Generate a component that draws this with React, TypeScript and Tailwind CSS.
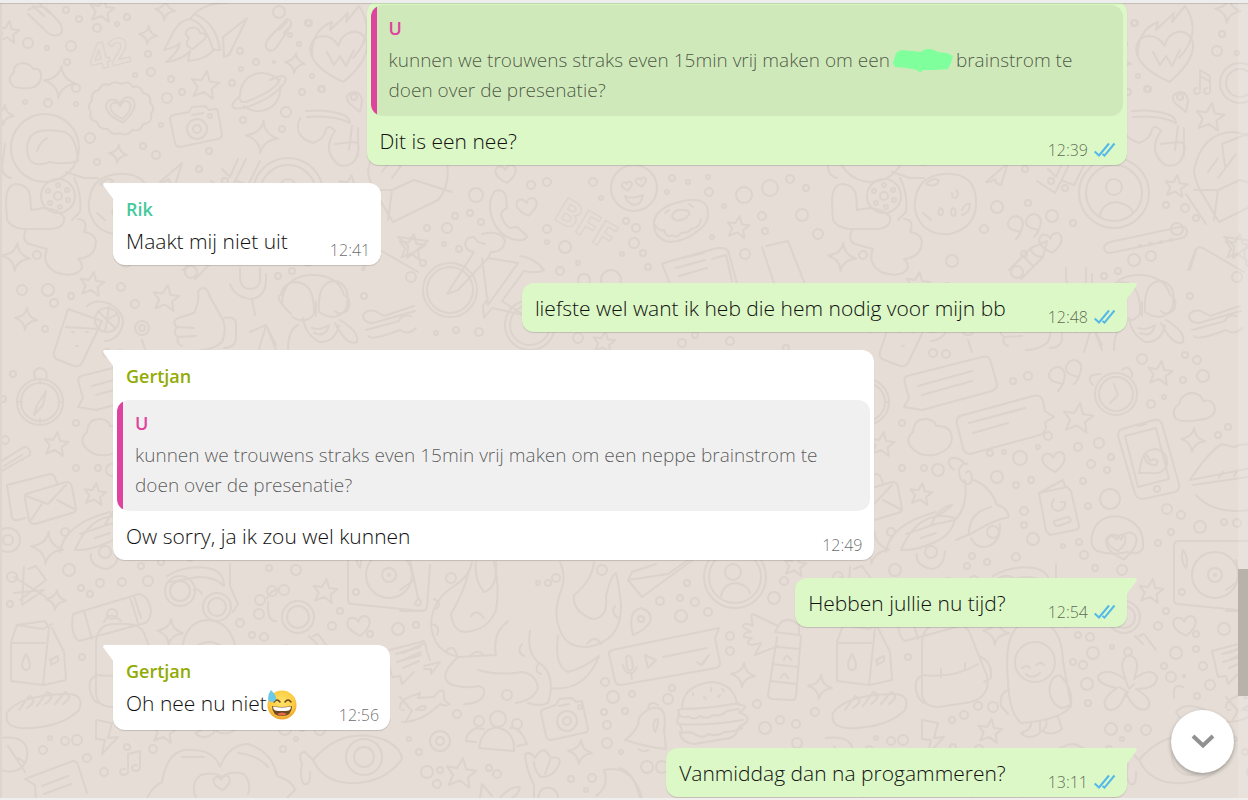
import { ReactNode } from 'react';

type Point = [x: number, y: number, size: number];

const BUBBLES: Point[] = [
  [66, 10, 3], [79, 19, 3], [97, 28, 4], [117, 24, 2], [127, 17, 3], [28, 43, 5], [47, 48, 2], [71, 46, 5],
  [67, 62, 3], [148, 54, 3], [135, 75, 2], [151, 72, 4], [171, 79, 3], [182, 92, 3], [167, 98, 5], [76, 88, 4],
  [76, 104, 2], [48, 103, 4], [25, 102, 2], [90, 138, 5], [161, 125, 2], [143, 146, 3], [156, 155, 4], [97, 162, 3],
  [209, 151, 3], [199, 169, 3], [240, 51, 3], [256, 62, 3], [274, 62, 1], [279, 12, 6], [309, 23, 3], [299, 44, 2],
  [241, 69, 2], [232, 83, 3], [302, 92, 3], [322, 89, 3], [286, 112, 5], [282, 129, 3], [243, 120, 3], [312, 76, 2],
  [531, 185, 4], [547, 182, 4], [476, 195, 7], [455, 216, 3], [470, 213, 3], [481, 222, 3], [427, 228, 3], [447, 228, 5],
  [444, 244, 2], [459, 249, 3], [423, 263, 3], [547, 229, 4], [547, 242, 2], [565, 247, 6], [593, 182, 4], [601, 198, 2],
  [626, 221, 3], [636, 228, 4], [634, 243, 5], [622, 254, 2], [643, 253, 3], [648, 267, 3], [578, 263, 2], [560, 271, 4],
  [667, 192, 2], [672, 178, 3], [688, 182, 2], [708, 177, 2], [709, 192, 4], [724, 206, 2], [762, 216, 4], [765, 231, 3],
  [745, 254, 5], [712, 237, 2], [744, 195, 8], [770, 188, 8], [790, 179, 4], [806, 188, 3], [802, 215, 6], [818, 234, 5],
  [22, 290, 5], [48, 290, 6], [71, 296, 3], [54, 303, 4], [45, 329, 3], [121, 287, 4], [135, 304, 4], [13, 374, 3],
  [3, 399, 3], [76, 423, 3], [5, 440, 4], [76, 468, 3], [98, 468, 3], [65, 532, 4], [278, 276, 3], [191, 272, 6],
  [364, 296, 3], [37, 255, 4], [171, 207, 6], [202, 203, 3], [225, 181, 3], [239, 188, 3], [226, 216, 6], [247, 223, 3],
  [158, 229, 4], [126, 261, 6], [198, 254, 3], [340, 205, 3], [359, 208, 4], [370, 218, 3], [351, 229, 6], [325, 256, 5],
  [308, 260, 6], [292, 271, 3], [290, 35, 2], [396, 34, 3], [391, 51, 5], [411, 53, 2], [321, 89, 3], [308, 23, 3],
  [187, 381, 3], [202, 376, 4], [316, 359, 5], [357, 380, 3], [377, 376, 6], [359, 355, 3], [371, 360, 4], [325, 404, 4],
  [338, 397, 2], [212, 447, 2], [222, 436, 4], [252, 447, 4], [273, 443, 5], [285, 457, 3], [281, 470, 3], [265, 464, 4],
  [164, 453, 3], [178, 452, 2], [194, 458, 7], [171, 477, 6], [112, 470, 6], [190, 485, 3], [205, 480, 3], [257, 481, 3],
  [262, 506, 3], [198, 511, 4], [198, 525, 3], [207, 539, 6], [341, 509, 5], [355, 515, 4], [374, 527, 6], [345, 532, 3],
  [332, 543, 3], [398, 522, 3], [411, 523, 4], [253, 542, 3], [237, 546, 2], [258, 555, 4], [190, 557, 4], [161, 562, 3],
  [146, 556, 3], [402, 427, 3], [392, 435, 3], [107, 353, 4], [120, 354, 4],
  [411, 277, 5], [479, 332, 4], [456, 330, 3], [436, 333, 2], [578, 338, 5], [611, 280, 10], [584, 280, 6],
  [682, 343, 4], [730, 341, 4], [695, 335, 3], [786, 348, 3],
  [12, 577, 5], [10, 604, 3], [69, 570, 6], [81, 588, 3], [90, 594, 3], [100, 583, 4], [122, 582, 4], [148, 581, 5],
  [141, 566, 3], [82, 657, 3], [65, 741, 4], [50, 738, 2], [77, 740, 5], [43, 750, 4], [87, 758, 4], [104, 772, 4],
  [127, 747, 3], [153, 749, 4], [240, 623, 4], [252, 635, 3], [264, 637, 4], [332, 626, 4], [340, 611, 3], [398, 629, 6],
  [370, 634, 3], [283, 749, 3], [296, 570, 5], [269, 568, 3], [267, 653, 6], [286, 647, 2], [302, 652, 4], [350, 653, 6],
  [370, 649, 3], [338, 666, 3], [345, 677, 5], [377, 666, 4], [358, 676, 1], [384, 685, 5], [257, 665, 4], [261, 684, 6],
  [262, 703, 3], [371, 696, 3], [152, 706, 4], [167, 707, 5], [138, 715, 4], [126, 720, 3], [285, 729, 6], [302, 728, 3],
  [320, 730, 5], [296, 739, 2], [451, 578, 5], [602, 570, 5], [538, 583, 2], [548, 583, 3], [556, 578, 4], [687, 583, 3],
  [660, 601, 4], [680, 598, 3], [695, 602, 4], [681, 616, 6], [708, 612, 4], [774, 598, 6], [784, 581, 4], [730, 636, 4],
  [730, 651, 4], [605, 682, 4], [613, 697, 6], [632, 694, 3], [604, 712, 3], [625, 711, 3], [607, 725, 4], [607, 743, 5],
  [621, 752, 2], [672, 688, 3], [668, 699, 5], [757, 704, 4], [765, 728, 6], [780, 720, 4], [796, 724, 4], [507, 695, 5],
  [457, 714, 4], [409, 739, 2], [419, 752, 3], [427, 772, 6], [440, 770, 3], [437, 784, 4], [489, 768, 3], [497, 774, 4],
  [571, 779, 3], [592, 778, 4], [586, 790, 2], [647, 767, 6], [662, 767, 6], [797, 743, 5], [815, 712, 4], [416, 625, 3],
];

const STARS: Point[] = [
  [8, 32, 11], [102, 10, 12], [205, 85, 14], [384, 117, 14], [350, 186, 11], [738, 227, 11], [92, 284, 12], [166, 298, 13],
  [56, 444, 12], [95, 494, 11], [252, 418, 15], [334, 373, 12], [325, 591, 12], [164, 731, 12], [461, 773, 15], [604, 342, 11],
  [795, 565, 11], [412, 247, 13],
];

const SPARKLES: Point[] = [
  [165, 10, 10], [148, 35, 9], [295, 63, 10], [60, 82, 16], [262, 137, 16], [118, 154, 9], [16, 257, 14], [4, 115, 10],
  [26, 319, 11], [367, 440, 12], [56, 600, 10], [170, 632, 13], [580, 752, 12], [743, 675, 12], [402, 10, 13], [47, 548, 16],
  [820, 687, 12],
];

const HEARTS: Point[] = [
  [121, 110, 14], [121, 110, 10], [527, 207, 10], [225, 243, 11], [228, 462, 11], [359, 626, 11], [340, 57, 28], [627, 186, 5], [641, 182, 5],
  [506, 174, 10], [291, 543, 9], [222, 783, 8], [296, 546, 15],
];

const DRAWINGS = [
  // mittens and cloud
  'M28 10q8-6 18-2l14 15q5 10-2 12-8 2-14-6L28 14M33 6l11 10M40 4l9 9',
  'M268 50q-5-5 1-12l18-19q5 1 4 7l-15 22q-4 4-8 2M279 30l8-8M284 33l7-8',
  'M13 86q-7-7 1-14-1-8 9-9 8 1 10 6 9-2 8 9-2 9-11 10-12 1-17-2',
  // rocket and kite
  'M190 19q12-17 38-16M190 19q16 5 23 31l7 0q-4-28-26-36M190 19q-10 1-16 12l-10 19q13-3 16-7-2 10-14 19 16-2 24-11l-2 10q20-2 26-12M190 28q-8 5-1 10-6 8 4 11 8-7 12-10 3-6-5-6-2-7-10-5',
  'M223 37l24-19-18 37-5 2-1-20',
  // planet
  'M240 96a22 22 0 0 1 39-15M280 86a22 22 0 0 1-36 20M240 96q-11 9-6 12 10 3 35-11 20-14 16-20-3-3-15 3M240 99q1 6 13 0 24-10 27-20',
  // badge
  'M121 84q8-4 12 3 8-2 10 6 9 2 7 10 6 5 1 11 2 9-8 10-2 8-11 6-5 7-12 3-8 3-12-4-9 1-11-7-9-2-6-10-5-6 1-11-2-9 7-11 3-8 10-5 5-5 12-1',
  // camera
  'M174 115l15-3 3-5 13-1 4 4 6-1q3 0 3 3l4 22q0 4-4 5l-38 8q-4 0-5-4l-5-24q0-3 4-4M192 115l11-2',
  'M544 709l12-4 3-6 13-1 4 4 6-1 6 28q0 4-5 4l-32 7q-4 0-5-4l-5-23q0-3 3-4M559 706l10-2',
  // astronaut
  'M28 142q4-15 30-11 18-1 20 30-14 4-28 1-17 6-21-4-3-6-1-16M37 151q3-9 10-13M11 178q-9-2-9-12l3-22M17 184q-11 0-11 18l1 18q4 8 17 9h28q14-2 12-12-6-8-20-9l-13 2-1-15q-2-10-13-11M26 230q-5 10 3 14l18 5q-6 14 8 23 20 7 27-4 0-6-4-9 18-2 18-18-2-8-12-9 5-12-6-13M66 172l18 6h14M74 178q8 15 6 34l-8 8',
  // cookie
  'M90 196q4-20 28-22 30-2 32 25 2 28-26 35-25 2-33-18-4-8-1-20M100 184q8-8 13-3-4 7-13 3M130 190q4 4 0 8-5 0-4-5M114 208q5 1 2 7-6 1-2-7M136 210q4-8 8-6-1 10-8 11M97 213l8 7M126 208q5 0 3 8-6 0-3-8',
  // sunglasses
  'M306 111q20-2 35 3 9 3 9 9-16-8-43-6M300 118q-8 18 13 25 12-4 13-14 4-5 9 2-14 20 4 34 16 4 19-14 3-9-6-9l-17 2M352 126l-3 24M358 128l0 28',
  'M167 576q18-11 41-8 16 3 16 18-8-9-26-9l-28 5M230 564v22l8 18-5 8M194 590q4-2 8 4',
  // burning heart, pin, note
  'M312 56q-1-26 20-34l-2 8 18-17-2 9 13-16q18 26-6 52',
  'M327 52l7 13 6-9 6 10 8-16M354 92q7 0 8 9l-2 11-10-8q-8-9 4-12',
  'M374 90v-20l10 6v15M374 76l9 5M374 92a3 3 0 1 1-3-4M384 92a3 3 0 1 1-3-4',
  // paper plane, checks and envelope
  'M160 182l22-19-7 22q-6-1-6-6-5 4-9 3M211 181l18 12 17-34M237 181l11 4 12-24M222 169l8 8 8-18',
  'M374 190q-6-12-6-20 8-38 40-38 34 6 38 24 6 28-8 44l-45 22-19-32M368 190h24l-4 30M392 190l22-10 38 12M382 172l10-14M392 178l18-24',
  'M399 166l-3-22 60-24M430 163l15-3M380 224l-20-30',
  // quotes
  'M190 239q7-8 1-8-10-2-9-8 2-7 9-7 8 3 5 12-1 6-6 11M208 237q7-8 1-8-10-2-9-8 2-7 9-7 8 3 5 12-1 6-6 11',
  'M232 391q7-8 1-8-11-2-10-9 2-7 10-7 8 3 5 13-1 6-6 11M248 384q7-8 1-8-10-2-9-9 2-7 9-7 9 3 5 13-1 6-6 11',
  // crayon, password field
  'M183 270l22-22 16-7-4 16-22 22M205 248q0 8 12 9M197 256l10 10M284 242l70-15q6-1 7 4 0 6-5 7l-72 15q-5 0-6-5 0-4 6-6M362 270l8-21q4-4 10 1l38 22M370 250l-6 20',
  // handset
  'M495 191q8-3 11 5l1 12q-5 2-6 7 3 10 9 13l7-1 10 9q-1 5-10 4-16-2-24-19-7-18 2-30',
  // face and donut
  'M625 196q7 4 18-1-2 10-9 10-7-2-9-9M654 222q2-14 25-20 24-6 28 5 4 14-8 23-14 12-30 12-16-4-15-20M655 225q4 7 9 5 3 9 8 5 5 4 9-2 8 0 10-4 9-1 10-10M672 216q3-9 16-5 4 3-4 8-10 4-12-3M665 213l4-3M689 204l4 3',
  // bird and bicycle
  'M398 237l30 4q-10 8-21 17l1-12-10-9M482 234q18-4 23 6-1 12-14 12l-3 6-30 32-11 4 27-42q-7 0-9-8 1-8 9-7l4 5 7 2M488 258l30 5-30 42-6-47M520 256q15 2 24 14-8 4-20 1l-22 30 22 14-32-7-8 10-1-12 5-8',
  // newspaper
  'M667 262l50-14q11-1 12 6l8 30H670l-8-20 5-2M674 260l30-7M676 268l29-8M679 276l28-8M712 259l14-4 6 26M762 247l12 36M766 246l22-5 18 46',
  // drink and lemon
  'M68 309l34 12-20 42q-3 4-8 3l-18-7q-3-3-2-7l14-43M66 327l32 2M87 306q9-8 23-2 14 8 13 20-4 16-18 17M107 320l-9-9M107 320l2-13M107 320l10-6M107 320l8 8M107 320l-2 12M72 332h2M86 332h2M76 346h2',
  // thumb
  'M194 313q6-12 4-22 8-8 12 6l13 23q4 10-1 22-9 8-22 8M194 313l-16 5q-7 4-1 9-5 6 1 10-2 7 4 9M176 327l18 1M178 337l18-1M224 318q10-2 12 4v18q-2 8-12 8',
  // microphone, lollipop, arrow
  'M240 268v10q1 11 10 11 11-1 10-11v-10M230 284q5 14 22 15 14-3 14-19v-6M252 299l3 16M142 340l4 12M250 332l16-7 10 20M266 326l-8 26M268 330l8 20',
  // monkey
  'M282 305q0-28 28-30 28-1 34 20 9 5 3 16-8 5-12 0M291 314q-18-18-10-19 2-12 14-13 20 0 19 32-8 11-22 3M319 312q-2-32 17-31 16 5 10 28-10 14-27 3M303 318q2 16 16 24 16 1 20-17M312 328q8 3 17-3-3 13-15 8M288 350q0-20 10-25M340 320q20 12 17 22-10 5-22-19M316 302v14',
  // spoons
  'M363 315q4-6 12-4l9 5 30-10M363 315q0 8 10 8l42-12M368 336q4 5 32-6 8 6 16-2M366 330l33-9q2-7 12-5',
  // compass and chat cards
  'M40 382v-4M40 423v-4M18 402h4M59 402h4M46 391l-9 14-3 10 9-10 3-14M36 379q-5-8 3-11 10 1 7 12',
  'M81 376l75-19q8-2 9 6l6 21q0 5-5 7l-70 19q-12-2-18-3l5-9-4-14q-2-6 2-8M92 386l54-15M96 395l50-14',
  'M134 416l73-20q8-2 10 5l2 10 9 6-9 5 1 6q-2 6-6 7l-70 19q-6-1-7-6l-6-24q-1-6 3-8M143 423l56-15M147 433l35-10',
  'M86 448q-8-8 1-16 1-14 14-13 9 2 9 7 15-1 16 12-1 13-18 17-14 2-22-7',
  'M350 419q-6-8 3-15 4-14 18-10 5 2 6 7 11-3 12 9-2 9-17 10-15 3-22-1',
  // paperclip and letters
  'M0 462l24-15q7 0 6 8l-28 16M4 466l18-11M7 485l43-11q4 0 5 4l2 5M7 485l5 33q2 3 6 2l7-2M26 494l40-12q5 0 6 5l4 22q0 3-4 4l-37 11q-5 0-6-4l-4-21q-1-4 1-5M26 496l22 8 18-19M31 520l12-18M74 509l-17-9M60 552q4-28 50-40M80 534l30-10',
  // alarm clock
  'M288 384l4 11-8 8M267 385q-6-5-1-10l8-1M296 370q6-6 10 3v4',
  // tablet and lips
  'M296 429l32-9q6-1 8 4l17 60q1 6-4 8l-32 7q-6 0-8-5l-17-58q0-6 4-7M299 436l31-8 13 51-31 8-13-51M312 426l8-2M313 473l2-10q3-14 15-14 12 3 11 16-4 10-17 8l-11 0M319 457q0 8 11 8l2-4-5-2-3 2-3-6M364 480q20-30 32-36l12 3q8-4 18-2M364 480l62-12M367 485q20-3 55-8M370 495q18 20 55 15M397 472l-4 6M412 470l-4 6',
  // scooter
  'M128 470q-9-8-3-12 9-1 14 6M140 473q4-6 6 5 0 6-5 6-8-2-8-14 3-8 8-6M139 480q3 28-10 40l-24 5q8-18 21-20-8 8-18 13M148 480q16 6 23 25 10 2 12 12-16 3-40 18-1-22 22-28M75 550q18-42 54-32-2 16-20 24-20 9-34 8M95 538l15-5M130 540l14-6M91 554q-2 12 15 15 12-2 13-18M145 538q6 12 18 8 12-5 11-22',
  // id card
  'M213 493l24-13 2 6M213 493l28-6 4 4 8 35q0 3-4 4l-25 5-4-4-7-38M228 499q-6 10 4 12 8-1 7-9l-4 0M228 521l14-4q4 1 2 5l-12 4q-4 0-4-5M271 551q-10-6-2-24 10-15 30-9 20 8 18 30-4 8-16 4-14 4-30-1',
  // record player
  'M352 541h70M352 541q-4 1-4 5l0 54q0 4 4 4l70 7M357 550q6 8 3 18-6-8-3-18',
  // bluetooth, speaker
  'M14 593l30-3-22 15 2-38M14 577l32 20M28 569l8-3 10 14-26 20M73 614l66-20q10 2 12 17-1 10-6 12l-66 18q-9-6-6-27M84 611l8 28M130 597l8 26M104 622q6-12 17-1M134 596l7 22',
  // paw and magnifier
  'M267 598q4-8 12-9M268 602q-1 20 8 19M318 634l12 16M309 636l8 8M318 634l-5 2',
  // carton
  'M17 625l28-4 4 7-6 57-32-4 0-39 6-17M17 625l26 4 9-5M11 643l34 0M52 628l12 24 2 28-22 5M26 654q-8 14 0 16 8-1 0-16M50 660l8-4v5l-7 4v-5',
  // backpack
  'M96 645q0-22 20-21 26-2 29 12l16 40q4 20-16 26l-32 5q-18 0-17-17V645M97 675q30 4 55-11M115 669v8M139 663v7M96 676q-8 2-6 14 2 10 8 13M153 656q14 6 12 22l-7 4',
  // penguin
  'M182 680q-6-60 27-60 27 3 28 41l8 45q-10 14-50 17-12-10-13-43M196 668q5-4 8 0M210 665q5-4 8 0M200 674q6 6 14-1M183 690q-10 2-8 16l7 8M226 680q4-6 9-4 12 14 10 28-9 8-17-1-8-12-2-23M205 724q0 6-10 9 8 8 19 0v-12M220 719q2 8-4 12 10 6 20-2l-4-12',
  // loaf and leaf
  'M7 713q12-18 60-19 18 0 12 16-16 16-48 18-28 2-24-15M19 710l10-14q10 4-2 12M37 706l10-14q10 4-2 12M55 704l10-12q9 4-2 12M0 738q30-4 27 20-5 18-27 12M8 746l17 26M18 758l6 4',
  // flash and notes
  'M96 720l16 3-4 15 10-1-16 17 3-14-9-1 0-19M128 770v-16l12-3v16M128 772a4 3 0 1 1-3-3M140 768a4 3 0 1 1-3-3M25 779l48-18q4 0 5 4l9 28M25 779l10 6 1 13M42 786l26-10M44 794l27-10',
  // hands
  'M147 798q6-12 15-16 6-35 30-32 22 0 28 17 8-22 28-23 25 8 29 32 15 4 18 14l-8 8M196 798q-6-16 5-23 12-4 21 2 10-7 22-3 8 10 4 20M182 757l22 0M238 753q20 2 30 14',
  // flower
  'M300 680q-9-20 3-25 13 3 5 24 17-13 23-2 0 12-21 12 19 11 11 20-12 4-21-16-8 21-19 16-8-9 10-21-20-4-19-12 9-10 28 4M300 681l3 8 5-5M293 687l9 5-4 6',
  // small chat
  'M386 651l38-10M386 651l6 26 8-1 2 8 12-12M396 654l24-7M397 662l24-7',
  // fish with tin
  'M313 760q30-35 72-20 16 8 17 19-16 22-45 24-32 2-44-23M313 760l-8-8q-8 0-3 12-3 14 2 20 7 2 6-12M348 698v-8q2-6 9-3M350 712q10-12 34 0 10 8 3 12-26 8-37-12',
  // book and cup
  'M400 611h22q4 0 5-4l3-42M410 560l8 38-3 6q5 4 6-2l-3-5M400 590l14-10',
  // octopus
  'M472 562q-2 14-18 24-22 14-23 38 2 28 28 33l36-2M476 562q-2 18 8 30 14-4 12-30M469 570q-4 20-18 44 2 18 15 18 22-2 30-22 4-22-2-48M496 655q-4-22 12-34M458 657q-22 20-6 28 16 4 26 1 10 2 4 12-6 6-18 6M478 670q20 6 44 2 14 2 16 16-4 12-22 15M530 631q-4 24 12 34 14 12 6 38-8 4-20 0M560 562q6 14 2 26-10 24-2 42 6 18 28 17 34-6 33-42-2-20-5-32-6 4-10 24 2 22-14 22-20-8-18-24 18-14 20-33M558 636q-4 30 10 36 16-4 31-16-14 36-48 32',
  'M434 599q9 4 2 10M431 624q10 2 6 11M446 651q8-8 11 5M470 656q8-8 13-1M484 618q-8-10-13-2M522 644q-6 8 2 12M538 664q-4 8 3 10M587 644q8-10 14 0M618 618q-8-6-3-12',
  // tube
  'M628 580l40-6 50-35M628 580l14 17 60-44M628 580l4-8 24-8',
  // pin and voice message
  'M633 635q-6-24 8-27 12 4 9 14-5 8-17 13M612 650l107-22-4 10 5 25q0 4-4 5l-95 17q-5 0-6-4l-6-27q0-3 3-4M626 657q5-4 6 4l1 7q-4 6-6-1l-1-10M623 665q2 10 10 8l4-6M631 673l1 6M645 655l11 5-8 8-3-13M663 657l44-9M697 662l4 3 8-10M703 664l6-9',
  // hand, lighthouse
  'M778 626l-25-12q-3 0 0 12-10-5-10 1l8 5q-8 0-7 5l8 1q-8 6 0 7l9-2-6 12 23-9M778 627q4-10 15-6l6 4v10l-24-3 3-5M777 637l-9 58q0 3 4 4l20 1q4 0 4-4l5-60M776 647l24 2M772 664l26 3M770 681l26 3M784 660q2-8 7 0M781 678q3-8 7 0',
  // burger
  'M682 709q0-24 30-27 22 2 25 22l8 2q0 4-6 6l6 3q6 4-2 10l-4 2q-3 12-15 12l-30 5q-14-2-14-12 4 2 0-7-6-4 0-9l-2-6 4-1q24 0 57-6M678 715q8 4 10 1 6 5 12 0 8 4 13-1 8 2 14-4l12-2M678 724q30 2 65-4M682 733q10-2 14 2 8 4 12-1 10 3 16-2 10 0 18-4M693 693v2M704 697l2 2M711 688v3M720 695l-2 2M722 689l2 2',
  // bell
  'M625 740q14-10 14-22 8-12 20-10 8 4 5 22l2 19q-20-2-41-9M638 749q6 4 10 1M648 708q2-8 10-3M655 732q-3-6 0-12l3-1q0 8-3 13',
  // fish
  'M400 708q-1-9 18-14 4-4 0 4l16-1 4-5q6-4 6 2l0 4q2 6 6 6-4 3-10 0-18 18-38 18M400 697l12 14-6 10M416 710q6-6 10-3-2 5-8 2M402 710h2M403 653l22-10q2 10 5 17M405 659l16-7M403 668l16-7M424 666l16-4-9 12v-5l-7 0',
  // people
  'M479 748q4-22 20-20 16 4 15 23l-35-3M466 740q1-8 10-12l8 1M510 728q10-2 17 16l-10 2M466 741l10 1',
  // tulip, horn
  'M534 785q-8-16-9-31 5-3 10 4 4-8 10-8l6 8q8-2 9 3-4 16-20 16M534 762q0 8 6 14M550 760l-5 14M534 785v14M538 798q2-12 12-10 8 2 8 10M480 798l2-14 10 12M500 798q10-12 20-11-2 8-8 11M596 796q14-10 8-26 28-6 38 28M620 768q14 4 20 30',
];

const STAR_PATH = 'M0-10 3-3 10-3 5 2 7 9 0 5-7 9-5 2-10-3-3-3Z';
const SPARKLE_PATH = 'M0-10Q1-2 10 0 1 2 0 10-1 2-10 0-1-2 0-10Z';
const HEART_PATH = 'M0 9C-8 4-11-1-10-5-8-10-2-9 0-4 2-9 8-10 10-5 11-1 8 4 0 9Z';

function Stamps({ points, d, tilt }: { points: Point[]; d: string; tilt: number }) {
  return (
    <>
      {points.map(([x, y, size], i) => (
        <path
          key={i}
          d={d}
          vectorEffect="non-scaling-stroke"
          transform={`translate(${x} ${y}) rotate(${tilt}) scale(${size / 10})`}
        />
      ))}
    </>
  );
}

const RINGS: Point[] = [
  [45, 148, 34], [58, 196, 17], [58, 196, 4], [58, 185, 2], [67, 190, 2], [68, 200, 2], [60, 207, 2], [50, 203, 2], [48, 191, 2],
  [197, 129, 10], [197, 129, 4], [210, 116, 2], [288, 193, 35], [288, 193, 28], [288, 187, 8],
  [735, 577, 31], [735, 577, 26], [733, 572, 8], [634, 188, 23], [354, 97, 3],
  [414, 83, 20], [414, 83, 14], [450, 290, 27], [450, 290, 23], [530, 325, 25], [530, 325, 20],
  [107, 320, 12], [142, 328, 7], [142, 328, 3], [40, 402, 23], [40, 402, 19], [290, 394, 21], [290, 394, 17],
  [284, 499, 10], [167, 532, 6], [105, 552, 6], [389, 575, 23], [389, 575, 7], [389, 575, 1], [356, 592, 3],
  [180, 591, 15], [180, 591, 10], [217, 607, 14], [217, 607, 9], [298, 617, 16], [298, 617, 11],
  [272, 591, 5], [284, 590, 5], [260, 600, 5], [259, 614, 5], [247, 662, 3], [209, 662, 20], [364, 757, 18], [364, 757, 10],
  [8, 540, 12], [8, 540, 5], [567, 721, 10], [567, 721, 4], [580, 707, 2], [641, 619, 3],
  [440, 741, 10], [440, 741, 4], [498, 719, 8], [479, 721, 5], [517, 724, 5], [331, 489, 3], [112, 614, 5],
  [314, 246, 1], [324, 244, 1], [335, 242, 1], [345, 240, 1],
];

function Wallpaper() {
  return (
    <svg
      aria-hidden="true"
      className="absolute inset-0 h-full w-full"
      fill="none"
      stroke="#dcd3cc"
      strokeWidth="2"
      strokeLinecap="round"
      strokeLinejoin="round"
    >
      <defs>
        <g id="doodles">
          {[...BUBBLES, ...RINGS].map(([x, y, r], i) => (
            <circle key={i} cx={x} cy={y} r={r} />
          ))}
          <Stamps points={STARS} d={STAR_PATH} tilt={8} />
          <Stamps points={SPARKLES} d={SPARKLE_PATH} tilt={6} />
          <Stamps points={HEARTS} d={HEART_PATH} tilt={-8} />
          {DRAWINGS.map((d) => (
            <path key={d} d={d} />
          ))}
          <path d="M273 217q4-15 18-15 14 3 16 11M721 596q3-13 16-13 12 3 13 10" />
        </g>
      </defs>
      <g transform="translate(-2 -3)">
        <use href="#doodles" />
        <use href="#doodles" x="826" />
        <use href="#doodles" x="1652" />
        <g fontFamily="Open Sans, sans-serif" fontWeight="700" strokeWidth="1">
          <text x="92" y="71" fontSize="36" transform="rotate(-14 92 71)">42</text>
          <text x="552" y="218" fontSize="36" transform="rotate(31 552 218)">BFF</text>
        </g>
      </g>
    </svg>
  );
}

function Checks() {
  return (
    <svg className="h-4 w-[22px]" viewBox="0 0 22 16" fill="none" stroke="#53b9ea" strokeWidth="2" role="img" aria-label="Gelezen">
      <path d="M.7 9.500 5 13.500 15 1.500M8.500 12l2 1.700L20.500 1.500" />
    </svg>
  );
}

function Redacted() {
  return (
    <svg className="mx-[3px] -mt-1 inline-block h-6 w-15 align-middle" viewBox="0 0 60 24" aria-hidden="true">
      <path
        d="M3 5 8 2l12 1 7 1 6-3h5l7 3 9 1 6 3-2 7-3 6-13 1H30l-3 3-3-3-10-2-12-1-2-4Z"
        fill="#80ff9d"
      />
    </svg>
  );
}

function SweatSmile() {
  return (
    <svg className="inline-block h-[30px] w-[30px] align-middle" viewBox="0 0 30 30" role="img" aria-label="😅">
      <defs>
        <radialGradient id="face" cx="0.5" cy="0.4" r="0.6">
          <stop offset="0" stopColor="#ffe36b" />
          <stop offset="0.7" stopColor="#fccb42" />
          <stop offset="1" stopColor="#eda12c" />
        </radialGradient>
      </defs>
      <circle cx="15" cy="15" r="14.5" fill="url(#face)" />
      <path d="M7 12q3-4 6 0M18 12q3-4 6 0" fill="none" stroke="#6b451b" strokeWidth="1.5" strokeLinecap="round" />
      <path d="M5 16q10 2 20 0 0 10-10 10T5 16" fill="#6d4722" />
      <path d="M6 16.5q9 2 18 0 0 3-2 4-7 1-14 0-2-1-2-4" fill="#fff" />
      <path d="M10 24q5-3 10 0-5 3-10 0" fill="#e8694e" />
      <path d="M4 0q5 5 5 8 0 4-4 4t-4-4q0-4 3-8" fill="#6cc9e8" />
    </svg>
  );
}

interface Message {
  id: number;
  own?: boolean;
  tail?: boolean;
  author?: string;
  authorColor?: string;
  quote?: ReactNode;
  text: ReactNode;
  time: string;
}

const messages: Message[] = [
  {
    id: 1,
    own: true,
    quote: (
      <>
        kunnen we trouwens straks even 15min vrij maken om een
        <Redacted />
        brainstrom te doen over de presenatie?
      </>
    ),
    text: 'Dit is een nee?',
    time: '12:39',
  },
  { id: 2, tail: true, author: 'Rik', authorColor: 'text-[#43c99c]', text: 'Maakt mij niet uit', time: '12:41' },
  { id: 3, own: true, tail: true, text: 'liefste wel want ik heb die hem nodig voor mijn bb', time: '12:48' },
  {
    id: 4,
    tail: true,
    author: 'Gertjan',
    authorColor: 'text-[#91ab01]',
    quote: 'kunnen we trouwens straks even 15min vrij maken om een neppe brainstrom te doen over de presenatie?',
    text: 'Ow sorry, ja ik zou wel kunnen',
    time: '12:49',
  },
  { id: 5, own: true, tail: true, text: 'Hebben jullie nu tijd?', time: '12:54' },
  {
    id: 6,
    tail: true,
    author: 'Gertjan',
    authorColor: 'text-[#91ab01]',
    text: (
      <>
        Oh nee nu niet
        <SweatSmile />
      </>
    ),
    time: '12:56',
  },
  { id: 7, own: true, tail: true, text: 'Vanmiddag dan na progammeren?', time: '13:11' },
];

function MessageBubble({ message }: { message: Message }) {
  const { own, tail, author, authorColor, quote, text, time } = message;
  return (
    <li
      className={`relative max-w-3/4 rounded-xl shadow-[0_1px_1px_rgba(0,0,0,0.15)] ${
        own ? 'self-end bg-[#dcf8c6]' : 'self-start bg-white'
      } ${tail ? (own ? 'rounded-tr-none' : 'rounded-tl-none') : ''}`}
    >
      {tail && (
        <svg
          aria-hidden="true"
          viewBox="0 0 11 17"
          className={`absolute top-0 h-[17px] w-[11px] ${
            own ? 'left-full -ml-px -scale-x-100 fill-[#dcf8c6]' : 'right-full -mr-px fill-white'
          }`}
        >
          <path d="M11 0H2C0 0-.4 1.6.7 3L11 17Z" />
        </svg>
      )}
      {author && (
        <h3 className={`px-[13px] pt-[11px] text-[18px] leading-[31px] font-semibold ${authorColor}`}>{author}</h3>
      )}
      {quote && (
        <div className={author ? 'px-1 pt-2' : 'px-1 pt-1'}>
          <blockquote className="flex overflow-hidden rounded-xl bg-black/6">
            <span className="w-1.5 shrink-0 bg-[#df439e]" />
            <div className="pt-[7px] pr-5 pb-[11px] pl-3">
              <p className="text-[18px] leading-[33px] font-semibold text-[#df439e]">U</p>
              <p className="text-[19px] leading-[30px] font-light text-black/65">{quote}</p>
            </div>
          </blockquote>
        </div>
      )}
      <div
        className={`flex items-end justify-between gap-[42px] pr-[11px] pb-[7px] pl-[13px] ${
          author && !quote ? 'pt-0.5' : 'pt-[11px]'
        }`}
      >
        <p className="mb-[3px] text-[21px] leading-7 font-light text-[#111111]">{text}</p>
        <div className="flex items-center gap-1.5 text-[16px] leading-4 font-light text-black/60">
          <time>{time}</time>
          {own && <Checks />}
        </div>
      </div>
    </li>
  );
}

export default function App() {
  return (
    <div className="flex h-screen flex-col overflow-hidden bg-[#e5ddd6] font-['Open_Sans','Noto_Sans',sans-serif]">
      <header className="z-10 h-[3px] shrink-0 bg-[#ededed] shadow-[0_1px_1px_rgba(0,0,0,0.15)]" />
      <main className="relative flex min-h-0 flex-1 overflow-hidden border-l-2 border-[#ddd5ce]">
        <Wallpaper />
        <ul className="relative flex flex-1 flex-col justify-end gap-[18px] px-[111px] pb-px">
          {messages.map((message) => (
            <MessageBubble key={message.id} message={message} />
          ))}
        </ul>
        <div className="relative flex w-2.5 flex-col justify-end bg-white/15 pb-[102px]">
          <div className="h-[127px] bg-[#b8b2ab]" />
        </div>
        <button
          type="button"
          aria-label="Naar beneden scrollen"
          className="absolute right-3.5 bottom-[25px] flex h-[63px] w-[63px] items-center justify-center rounded-full bg-white shadow-[0_2px_4px_rgba(0,0,0,0.3)]"
        >
          <svg className="h-4 w-6" viewBox="0 0 24 16" fill="none" stroke="#919191" strokeWidth="4">
            <path d="M2 2l10 9.500 10-9.500" />
          </svg>
        </button>
      </main>
      <footer className="h-0.5 shrink-0 bg-[#f0efee]" />
    </div>
  );
}
